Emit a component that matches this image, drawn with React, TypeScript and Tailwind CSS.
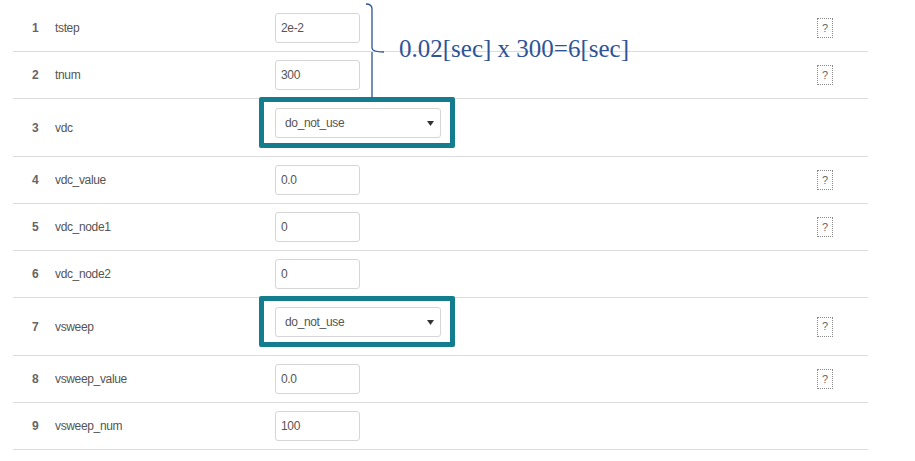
import React from 'react'

type Param = {
  no: number
  name: string
  value: string
  kind: 'input' | 'select'
  help: boolean
  marked?: boolean
}

const params: Param[] = [
  { no: 1, name: 'tstep', value: '2e-2', kind: 'input', help: true },
  { no: 2, name: 'tnum', value: '300', kind: 'input', help: true },
  { no: 3, name: 'vdc', value: 'do_not_use', kind: 'select', help: false, marked: true },
  { no: 4, name: 'vdc_value', value: '0.0', kind: 'input', help: true },
  { no: 5, name: 'vdc_node1', value: '0', kind: 'input', help: true },
  { no: 6, name: 'vdc_node2', value: '0', kind: 'input', help: false },
  { no: 7, name: 'vsweep', value: 'do_not_use', kind: 'select', help: true, marked: true },
  { no: 8, name: 'vsweep_value', value: '0.0', kind: 'input', help: true },
  { no: 9, name: 'vsweep_num', value: '100', kind: 'input', help: false },
]

const ui = "font-['Liberation_Sans',Arial,sans-serif] tracking-[-0.35px]"

function HelpMark() {
  return (
    <span className={`flex h-[20px] w-[16px] items-center justify-center border border-dotted border-[#8a8a8a] text-[11px] leading-none text-[#666] ${ui}`}>
      ?
    </span>
  )
}

function Field({ p }: { p: Param }) {
  if (p.kind === 'input') {
    return (
      <div className={`flex h-[30px] w-[85px] items-center rounded-[3px] border border-[#d6d6d6] bg-white pl-[5px] text-[12px] text-[#555] ${ui}`}>
        {p.value}
      </div>
    )
  }
  return (
    <div className="relative">
      {p.marked && (
        <span className="pointer-events-none absolute -left-[16px] -top-[11px] h-[51px] w-[196px] rounded-[2px] border-[5px] border-[#137d8f]" />
      )}
      <div className={`relative flex h-[30px] w-[166px] items-center justify-between rounded-[3px] border border-[#d6d6d6] bg-white pl-[9px] pr-[6px] text-[12px] text-[#555] ${ui}`}>
        <span>{p.value}</span>
        <svg width="7" height="5" viewBox="0 0 7 5">
          <path d="M0 0 L7 0 L3.5 5 Z" fill="#333" />
        </svg>
      </div>
    </div>
  )
}

export default function App() {
  return (
    <div className="relative h-[461px] w-[915px] overflow-hidden bg-white">
      <div className="ml-[13px] w-[855px] pt-[5px]">
        {params.map(p => (
          <div
            key={p.no}
            className={`flex border-b border-[#dcdcdc] ${p.kind === 'select' ? 'h-[58px]' : 'h-[47px]'}`}
          >
            <div className={`flex w-[42px] items-center pl-[19px] text-[12px] font-bold text-[#666] ${ui}`}>{p.no}</div>
            <div className={`flex w-[220px] items-center text-[12px] text-[#555] ${ui}`}>{p.name}</div>
            <div className={`flex w-[542px] ${p.kind === 'select' ? 'items-start pt-[9px]' : 'items-center'}`}>
              <Field p={p} />
            </div>
            <div className="flex items-center">{p.help && <HelpMark />}</div>
          </div>
        ))}
      </div>

      {/* annotation: bracket over tstep / tnum */}
      <svg className="absolute left-[360px] top-[2px]" width="30" height="96" viewBox="0 0 30 96">
        <path
          d="M6 2 Q12 2 12 7 L12 46 Q12 50 24 50 M12 50 Q12 54 12 58 L12 96"
          fill="none"
          stroke="#2e5496"
          strokeWidth="1.3"
        />
      </svg>
      <span className="absolute left-[399px] top-[36px] font-['Liberation_Serif','Times_New_Roman',serif] text-[25px] leading-none text-[#2e5496]">
        0.02[sec] x 300=6[sec]
      </span>
    </div>
  )
}
